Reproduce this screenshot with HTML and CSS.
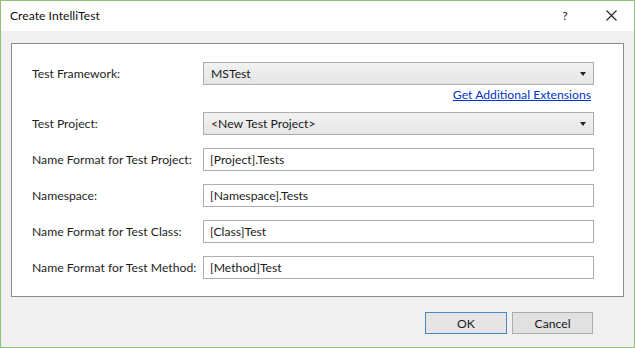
FILE: index.html
```html
<!DOCTYPE html>
<html>
<head>
<meta charset="utf-8">
<link rel="stylesheet" href="styles.css">
</head>
<body>
<div class="window">
  <div class="titlebar">
    <span class="title">Create IntelliTest</span>
    <span class="help">?</span>
    <span class="close"><svg width="11" height="11" viewBox="0 0 11 11"><path d="M0.5 0.5 L10.5 10.5 M10.5 0.5 L0.5 10.5" stroke="#222" stroke-width="1.1" fill="none"/></svg></span>
  </div>
  <div class="body">
    <div class="panel">
      <div class="row">
        <label class="lbl">Test Framework:</label>
        <div class="combo"><span>MSTest</span><span class="arrow"></span></div>
      </div>
      <div class="linkrow"><a class="link">Get Additional Extensions</a></div>
      <div class="row">
        <label class="lbl">Test Project:</label>
        <div class="combo"><span>&lt;New Test Project&gt;</span><span class="arrow"></span></div>
      </div>
      <div class="row">
        <label class="lbl">Name Format for Test Project:</label>
        <div class="text">[Project].Tests</div>
      </div>
      <div class="row">
        <label class="lbl">Namespace:</label>
        <div class="text">[Namespace].Tests</div>
      </div>
      <div class="row">
        <label class="lbl">Name Format for Test Class:</label>
        <div class="text">[Class]Test</div>
      </div>
      <div class="row">
        <label class="lbl">Name Format for Test Method:</label>
        <div class="text">[Method]Test</div>
      </div>
    </div>
    <div class="buttons">
      <div class="btn default">OK</div>
      <div class="btn">Cancel</div>
    </div>
  </div>
</div>
</body>
</html>
```
FILE: styles.css
```css
html, body {
  margin: 0;
  padding: 0;
  background: #f0f0f0;
}
.window {
  width: 635px;
  height: 348px;
  box-sizing: border-box;
  border: 1px solid #8fc27a;
  background: #f0f0f0;
  font-family: "Lato", "Noto Sans", sans-serif;
  font-size: 12.2px;
  color: #1a1a1a;
  display: flex;
  flex-direction: column;
}
.titlebar {
  height: 30px;
  background: #fff;
  display: flex;
  align-items: center;
  padding-left: 9px;
  flex: none;
}
.title {
  flex: 1;
  color: #111;
  margin-top: -2px;
}
.help {
  width: 46px;
  text-align: center;
  margin-right: 0px;
  margin-top: -2px;
}
.close {
  width: 46px;
  display: flex;
  justify-content: center;
  margin-top: -2px;
}
.body {
  flex: 1;
  padding: 12px 10px 0 10px;
  display: flex;
  flex-direction: column;
}
.panel {
  height: 254px;
  box-sizing: border-box;
  background: #fff;
  border: 1px solid #8c8c8c;
  padding: 18px 29px 0 20px;
  display: flex;
  flex-direction: column;
}
.row {
  display: flex;
  align-items: center;
  height: 23px;
  margin-bottom: 13px;
}
.lbl {
  width: 171px;
  flex: none;
  white-space: nowrap;
  color: #1e1e1e;
}
.combo {
  flex: 1;
  height: 23px;
  box-sizing: border-box;
  border: 1px solid #adadad;
  background: linear-gradient(#f2f2f2, #e5e5e5);
  display: flex;
  align-items: center;
  padding-left: 7px;
  padding-right: 7px;
}
.combo span:first-child {
  flex: 1;
}
.arrow {
  width: 0;
  height: 0;
  border-left: 3.5px solid transparent;
  border-right: 3.5px solid transparent;
  border-top: 4px solid #222;
}
.text {
  flex: 1;
  height: 23px;
  box-sizing: border-box;
  border: 1px solid #adadad;
  background: #fff;
  display: flex;
  align-items: center;
  padding-left: 6px;
}
.linkrow {
  display: flex;
  justify-content: flex-end;
  margin-top: -12px;
  margin-bottom: 9px;
  height: 17px;
  align-items: center;
  margin-right: 3px;
}
.link {
  color: #0033cc;
  text-decoration: underline;
}
.buttons {
  display: flex;
  justify-content: flex-end;
  gap: 5px;
  padding-top: 15px;
  padding-right: 31px;
}
.btn {
  width: 81px;
  height: 22px;
  box-sizing: border-box;
  border: 1px solid #adadad;
  background: #e1e1e1;
  display: flex;
  align-items: center;
  justify-content: center;
}
.btn.default {
  width: 82px;
  border-color: #4a8ac4;
  background: #e5e5e5;
}
```
